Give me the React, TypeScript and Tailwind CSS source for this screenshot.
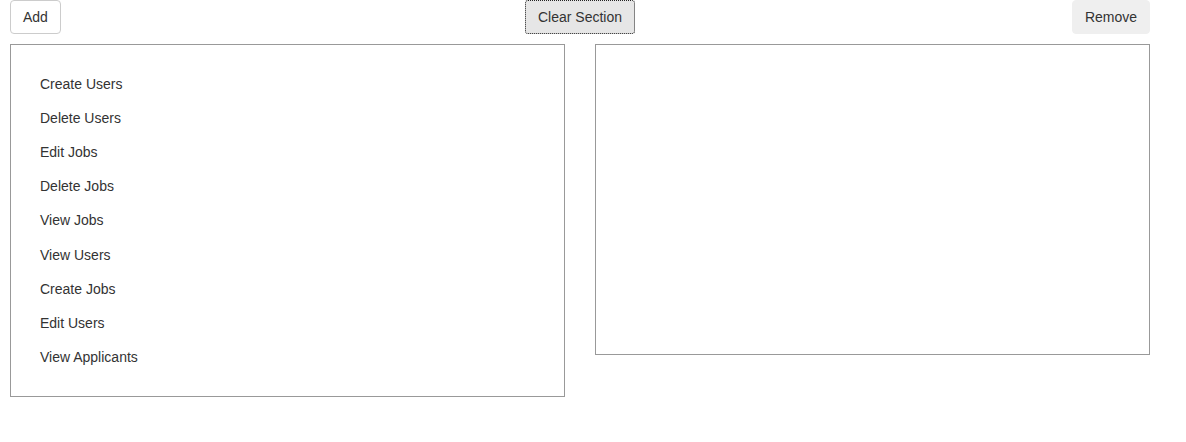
import React from "react";

const items = [
  "Create Users",
  "Delete Users",
  "Edit Jobs",
  "Delete Jobs",
  "View Jobs",
  "View Users",
  "Create Jobs",
  "Edit Users",
  "View Applicants",
];

export default function App() {
  return (
    <div
      className="w-[1186px] h-[442px] bg-white text-[14px] text-[#333]"
      style={{ fontFamily: '"Liberation Sans", Arial, sans-serif' }}
    >
      <div className="w-[1140px] ml-[10px]">
        <div className="grid grid-cols-3 items-start">
          <button className="justify-self-start h-[34px] px-[12px] bg-white border border-[#ccc] rounded-[4px] leading-[20px]">
            Add
          </button>
          <button className="justify-self-center h-[34px] w-[110px] bg-[#e6e6e6] border border-dotted border-[#222] rounded-[3px] leading-[20px]">
            Clear Section
          </button>
          <button className="justify-self-end h-[34px] w-[78px] bg-[#efefef] border border-[#efefef] rounded-[4px] leading-[20px]">
            Remove
          </button>
        </div>
        <div className="flex gap-[30px] mt-[10px] items-start">
          <div className="w-[555px] h-[353px] border border-[#999] py-[22px] pl-[29px]">
            {items.map((t) => (
              <div key={t} className="h-[34.2px] flex items-center">
                {t}
              </div>
            ))}
          </div>
          <div className="w-[555px] h-[311px] border border-[#999]" />
        </div>
      </div>
    </div>
  );
}
